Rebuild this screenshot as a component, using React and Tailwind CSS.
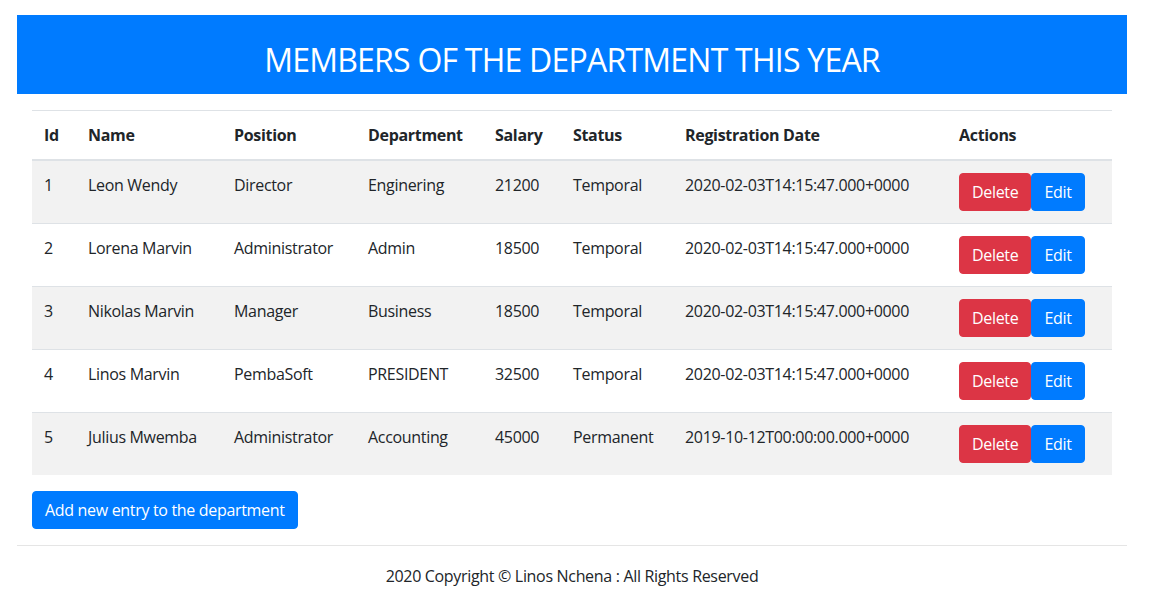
import React from 'react';

const members = [
  { id: 1, name: 'Leon Wendy', position: 'Director', department: 'Enginering', salary: 21200, status: 'Temporal', date: '2020-02-03T14:15:47.000+0000' },
  { id: 2, name: 'Lorena Marvin', position: 'Administrator', department: 'Admin', salary: 18500, status: 'Temporal', date: '2020-02-03T14:15:47.000+0000' },
  { id: 3, name: 'Nikolas Marvin', position: 'Manager', department: 'Business', salary: 18500, status: 'Temporal', date: '2020-02-03T14:15:47.000+0000' },
  { id: 4, name: 'Linos Marvin', position: 'PembaSoft', department: 'PRESIDENT', salary: 32500, status: 'Temporal', date: '2020-02-03T14:15:47.000+0000' },
  { id: 5, name: 'Julius Mwemba', position: 'Administrator', department: 'Accounting', salary: 45000, status: 'Permanent', date: '2019-10-12T00:00:00.000+0000' },
];

const App = () => {
  return (
    <div className="min-h-screen bg-white text-[#212529] text-base leading-6 tracking-[-0.02em] font-['Open_Sans',sans-serif]">
      <div className="w-[1127px] pl-[17px] pt-[15px]">
        {/* Header */}
        <div className="bg-[#007bff] h-[79px] flex items-center justify-center pt-[10px]">
          <h1 className="text-white text-[32px] leading-tight font-normal tracking-[-0.024em]">MEMBERS OF THE DEPARTMENT THIS YEAR</h1>
        </div>

        <div className="px-[15px] mt-4">
          {/* Members table */}
          <table className="w-full table-fixed border-collapse mb-4">
            <colgroup>
              <col className="w-[44px]" />
              <col className="w-[146px]" />
              <col className="w-[134px]" />
              <col className="w-[127px]" />
              <col className="w-[78px]" />
              <col className="w-[112px]" />
              <col className="w-[274px]" />
              <col className="w-[165px]" />
            </colgroup>
            <thead>
              <tr className="border-t border-[#dee2e6]">
                {['Id', 'Name', 'Position', 'Department', 'Salary', 'Status', 'Registration Date', 'Actions'].map((h) => (
                  <th key={h} className="text-left font-bold p-3 align-bottom border-b-2 border-[#dee2e6]">{h}</th>
                ))}
              </tr>
            </thead>
            <tbody>
              {members.map((m, i) => (
                <tr key={m.id} className={`border-t border-[#dee2e6] ${i % 2 === 0 ? 'bg-[#f2f2f2]' : 'bg-white'}`}>
                  <td className="p-3 align-top">{m.id}</td>
                  <td className="p-3 align-top">{m.name}</td>
                  <td className="p-3 align-top">{m.position}</td>
                  <td className="p-3 align-top">{m.department}</td>
                  <td className="p-3 align-top">{m.salary}</td>
                  <td className="p-3 align-top">{m.status}</td>
                  <td className="p-3 align-top">{m.date}</td>
                  <td className="p-3 align-top">
                    <div className="flex">
                      <button className="bg-[#dc3545] border border-[#dc3545] text-white px-3 py-1.5 rounded">Delete</button>
                      <button className="bg-[#007bff] border border-[#007bff] text-white px-3 py-1.5 rounded">Edit</button>
                    </div>
                  </td>
                </tr>
              ))}
            </tbody>
          </table>

          <button className="bg-[#007bff] border border-[#007bff] text-white px-3 py-1.5 rounded">Add new entry to the department</button>
        </div>

        <hr className="mt-4 border-t border-[#e5e5e5]" />
        <p className="text-center py-[18px]">2020 Copyright © Linos Nchena : All Rights Reserved</p>
      </div>
    </div>
  );
};

export default App;
